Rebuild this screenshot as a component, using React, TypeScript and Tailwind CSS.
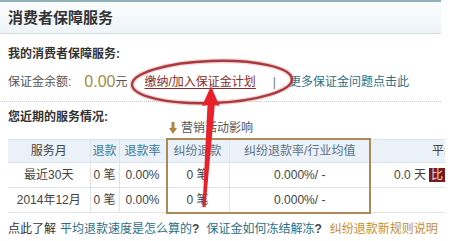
import React from 'react'

const FONT = { fontFamily: '"Liberation Sans", "Noto Sans CJK SC", sans-serif' }

interface Row {
  month: string
  refunds: string
  rate: string
  disputes: string
  disputeRate: string
  speed?: string
}

const ROWS: Row[] = [
  { month: '最近30天', refunds: '0 笔', rate: '0.00%', disputes: '0 笔', disputeRate: '0.000%/ -', speed: '0.0 天' },
  { month: '2014年12月', refunds: '0 笔', rate: '0.00%', disputes: '0 笔', disputeRate: '0.000%/ -' },
]

// red marker drawn over the screenshot: ellipse round the link + arrow pointing at it
const Annotation: React.FC = () => (
  <svg className="absolute left-0 top-0 pointer-events-none" width="450" height="241" viewBox="0 0 450 241">
    <g transform="rotate(-2 212 82)">
      <ellipse cx="212" cy="82" rx="80" ry="21" fill="none" stroke="#e7a3a5" strokeWidth="5" opacity="0.45" />
      <ellipse cx="212" cy="82" rx="80" ry="21" fill="none" stroke="#a8393e" strokeWidth="2.4" />
    </g>
    <polygon
      points="211,86 219.5,106 214.8,105 205.5,207 202.5,207 207.5,105 202,106"
      fill="#e8212b"
    />
  </svg>
)

const DownArrow: React.FC = () => (
  <svg width="8" height="12" viewBox="0 0 8 12">
    <rect x="2.5" y="0" width="3" height="7" fill="#b08442" />
    <polygon points="0,6 8,6 4,12" fill="#b08442" />
  </svg>
)

export default function App() {
  return (
    <div className="relative w-[450px] h-[241px] overflow-hidden bg-white text-[12px] leading-4 text-[#555]" style={FONT}>
      <div className="w-[441px]">
        <div className="h-[34px] border-t-2 border-b border-t-[#8db3b8] border-b-[#d3dcdf] bg-gradient-to-b from-[#fbfdfe] to-[#eef4f8] flex items-center pl-[8px]">
          <span className="text-[15px] font-bold text-[#333]">消费者保障服务</span>
        </div>

        <div className="pl-[8px] pt-[12px] font-bold text-[#333]">我的消费者保障服务:</div>

        <div className="flex items-center pl-[8px] h-[24px] mt-[8px] whitespace-nowrap">
          <span>保证金余额:</span>
          <span className="ml-[13px] text-[16px] text-[#a08c45]">0.00</span>
          <span>元</span>
          <a className="ml-[17px] text-[#8a2b2b] underline underline-offset-2">缴纳/加入保证金计划</a>
          <span className="ml-[17px] text-[#777]">|</span>
          <span className="ml-[13px] text-[#2b6f87]">更多保证金问题点击此</span>
        </div>

        <div className="mt-[7px] border-b border-dotted border-[#c8c8c8]" />

        <div className="flex h-[37px] whitespace-nowrap">
          <span className="self-start pl-[8px] pt-[7px] font-bold text-[#333]">您近期的服务情况:</span>
          <span className="self-end mb-[3px] ml-[61px] flex items-center">
            <DownArrow />
            <span className="ml-[4px]">营销活动影响</span>
          </span>
        </div>
      </div>

      <div className="relative ml-[8px] w-[437px]">
        <table className="table-fixed w-[437px] border-collapse text-center whitespace-nowrap">
          <colgroup>
            <col className="w-[82px]" />
            <col className="w-[29px]" />
            <col className="w-[47px]" />
            <col className="w-[63px]" />
            <col className="w-[141px]" />
            <col className="w-[75px]" />
          </colgroup>
          <thead>
            <tr className="h-[23px] bg-[#eaf1f8] border-y border-[#dbe3ea]">
              <th className="font-normal text-[#444] border-r border-[#dbe3ea]">服务月</th>
              <th className="font-normal text-[#3a7898] border-r border-[#dbe3ea]">退款</th>
              <th className="font-normal text-[#3a7898] border-r border-[#dbe3ea]">退款率</th>
              <th className="font-normal text-[#5a7285] border-r border-[#dbe3ea]">纠纷退款</th>
              <th className="font-normal text-[#5a7285]">纠纷退款率/行业均值</th>
              <th className="font-normal text-[#444] overflow-hidden text-left pl-[62px]">平均退款速度</th>
            </tr>
          </thead>
          <tbody>
            {ROWS.map((r) => (
              <tr key={r.month} className="h-[25px] border-b border-[#e0e4e8] text-[#444]">
                <td className="border-r border-[#e2e2e2]">{r.month}</td>
                <td className="border-r border-[#e2e2e2]">{r.refunds}</td>
                <td className="border-r border-[#e2e2e2]">{r.rate}</td>
                <td className="border-r border-[#e2e2e2]">{r.disputes}</td>
                <td>{r.disputeRate}</td>
                <td className="overflow-hidden text-right">
                  {r.speed && (
                    <span className="inline-flex items-center">
                      {r.speed}
                      <span className="ml-[3px] px-[2px] h-[14px] leading-[14px] bg-[#7a1c1c] text-[#f3d6d0]">比</span>
                    </span>
                  )}
                </td>
              </tr>
            ))}
          </tbody>
        </table>
        {/* highlight box round the dispute columns */}
        <div className="absolute left-[158px] top-[-1px] w-[205px] h-[76px] border-2 border-[#ad8a55] pointer-events-none" />
      </div>

      <div className="mt-[8px] pl-[8px] whitespace-nowrap flex">
        <span className="text-[#333]">点此了解</span>
        <span className="ml-[4px] text-[#2b6f87]">
          平均退款速度是怎么算的<b className="text-[#444]">?</b>
        </span>
        <span className="ml-[7px] text-[#2b6f87]">
          保证金如何冻结解冻<b className="text-[#444]">?</b>
        </span>
        <span className="ml-[8px] text-[#c58d30]">纠纷退款新规则说明</span>
      </div>

      <Annotation />
    </div>
  )
}
